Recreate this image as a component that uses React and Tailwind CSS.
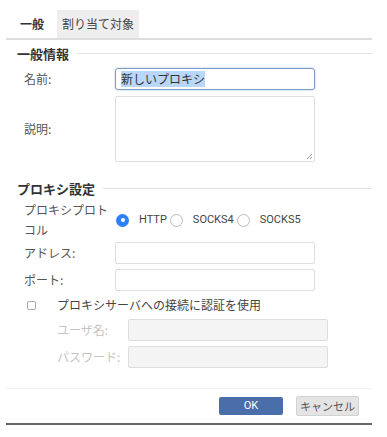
import React from 'react';

const font = { fontFamily: '"Noto Sans CJK JP", Roboto, sans-serif' };

function Row({ label, children, className = '' }) {
  return (
    <div className={`flex items-center ${className}`}>
      <div className="w-[109px] shrink-0 pl-[18px] text-[12px] text-[#555]">{label}</div>
      {children}
    </div>
  );
}

function Radio({ checked, label }) {
  return (
    <label className="flex items-center">
      {checked ? (
        <span className="w-[13px] h-[13px] rounded-full bg-[#2f80f5] flex items-center justify-center">
          <span className="w-[4px] h-[4px] rounded-full bg-white" />
        </span>
      ) : (
        <span className="w-[13px] h-[13px] rounded-full border border-[#bbb] bg-white" />
      )}
      <span className="ml-[10px] mr-[3px] text-[11px] text-[#444]" style={{ fontFamily: 'Roboto, sans-serif' }}>
        {label}
      </span>
    </label>
  );
}

export default function App() {
  return (
    <div className="w-[387px] h-[437px] bg-white" style={font}>
      <div className="ml-[6px] w-[366px] h-[425px] border-b-2 border-[#666] flex flex-col">
        {/* tabs */}
        <div className="h-[40px] border-b-2 border-[#ddd] flex items-end">
          <div className="w-[51px] h-[28px] flex items-center pl-[14px] text-[12px] font-bold text-[#333]">一般</div>
          <div className="w-[82px] h-[28px] bg-[#eeeeee] flex items-center justify-center text-[12px] text-[#444]">割り当て対象</div>
        </div>

        {/* 一般情報 */}
        <div className="flex items-center mt-[5px] h-[17px]">
          <span className="pl-[11px] text-[13px] font-bold text-[#333]">一般情報</span>
          <span className="flex-1 ml-[8px] h-px bg-[#e2e2e2]" />
        </div>

        <Row label="名前:" className="mt-[6px]">
          <div className="w-[200px] h-[22px] border border-[#7f9cc9] rounded-[3px] shadow-[0_0_2px_#9bb5e0] flex items-center pl-[5px]">
            <span className="bg-[#b9d6fb] text-[12px] text-[#333] leading-[16px]">新しいプロキシ</span>
          </div>
        </Row>

        <Row label="説明:" className="mt-[6px]">
          <div className="relative w-[200px] h-[66px] border border-[#ddd] rounded-[2px]">
            <svg className="absolute right-[1px] bottom-[1px]" width="7" height="7" viewBox="0 0 7 7">
              <path d="M6 1L1 6M6 4L4 6" stroke="#999" strokeWidth="1" />
            </svg>
          </div>
        </Row>

        {/* プロキシ設定 */}
        <div className="flex items-center mt-[18px] h-[17px]">
          <span className="pl-[11px] text-[13px] font-bold text-[#333]">プロキシ設定</span>
          <span className="flex-1 ml-[8px] h-px bg-[#e2e2e2]" />
        </div>

        <div className="flex items-center mt-[3px]">
          <div className="w-[109px] shrink-0 pl-[18px] pr-[6px] text-[12px] leading-[20px] text-[#555]">プロキシプロトコル</div>
          <div className="flex items-center pl-[1px]">
            <Radio checked label="HTTP" />
            <Radio label="SOCKS4" />
            <Radio label="SOCKS5" />
          </div>
        </div>

        <Row label="アドレス:" className="mt-[2px]">
          <div className="w-[200px] h-[22px] border border-[#ddd] rounded-[2px]" />
        </Row>
        <Row label="ポート:" className="mt-[5px]">
          <div className="w-[200px] h-[22px] border border-[#ddd] rounded-[2px]" />
        </Row>

        <div className="flex items-center mt-[6px] h-[16px]">
          <span className="ml-[21px] w-[9px] h-[9px] border border-[#aaa] rounded-[2px]" />
          <span className="ml-[21px] text-[12px] text-[#444]">プロキシサーバへの接続に認証を使用</span>
        </div>

        <div className="flex items-center mt-[6px]">
          <div className="w-[122px] shrink-0 pl-[51px] text-[12px] text-[#c4c4c4]">ユーザ名:</div>
          <div className="w-[200px] h-[22px] border border-[#ddd] bg-[#f4f4f4] rounded-[2px]" />
        </div>
        <div className="flex items-center mt-[5px]">
          <div className="w-[122px] shrink-0 pl-[51px] text-[12px] text-[#c4c4c4]">パスワード:</div>
          <div className="w-[200px] h-[22px] border border-[#ddd] bg-[#f4f4f4] rounded-[2px]" />
        </div>

        {/* footer */}
        <div className="mt-[20px] h-px bg-[#eeeeee]" />
        <div className="flex-1 flex items-center justify-end pr-[13px] gap-[13px]">
          <button className="w-[64px] h-[18px] bg-[#4a6ea9] rounded-[2px] text-white text-[11px] leading-[18px]" style={{ fontFamily: 'Roboto, sans-serif' }}>OK</button>
          <button className="w-[63px] h-[20px] bg-[#e4e4e4] border border-[#d2d2d2] rounded-[2px] text-[11px] text-[#555]">キャンセル</button>
        </div>
      </div>
    </div>
  );
}
